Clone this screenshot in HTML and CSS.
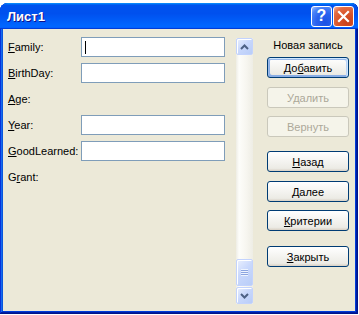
FILE: index.html
```html
<!DOCTYPE html>
<html lang="ru">
<head>
  <meta charset="UTF-8">
  <title>Лист1</title>
  <link rel="stylesheet" href="styles.css">
</head>
<body>
<div class="window">
  <div class="title-bar">
    <span class="title">Лист1</span>
    <div class="title-buttons">
      <span class="tb-btn help">?</span>
      <span class="tb-btn close">
        <svg width="19" height="19" viewBox="0 0 19 19">
          <path d="M5 5 L14 14 M14 5 L5 14" stroke="#fff" stroke-width="2.2" stroke-linecap="square"/>
        </svg>
      </span>
    </div>
  </div>

  <div class="window-body">
    <div class="fields">
      <div class="row">
        <span class="label"><u>F</u>amily:</span>
        <div class="box"><span class="caret"></span></div>
      </div>
      <div class="row">
        <span class="label"><u>B</u>irthDay:</span>
        <div class="box"></div>
      </div>
      <div class="row">
        <span class="label"><u>A</u>ge:</span>
      </div>
      <div class="row">
        <span class="label"><u>Y</u>ear:</span>
        <div class="box"></div>
      </div>
      <div class="row">
        <span class="label"><u>G</u>oodLearned:</span>
        <div class="box"></div>
      </div>
      <div class="row">
        <span class="label">G<u>r</u>ant:</span>
      </div>
    </div>

    <div class="scrollbar">
      <div class="sb-btn">
        <svg width="9" height="6" viewBox="0 0 9 6"><path d="M1 5 L4.5 1.5 L8 5" stroke="#4d6185" stroke-width="2" fill="none"/></svg>
      </div>
      <div class="track">
        <div class="thumb"><span class="grip"></span></div>
      </div>
      <div class="sb-btn">
        <svg width="9" height="6" viewBox="0 0 9 6"><path d="M1 1 L4.5 4.5 L8 1" stroke="#4d6185" stroke-width="2" fill="none"/></svg>
      </div>
    </div>

    <div class="actions">
      <div class="state">Новая запись</div>
      <button class="btn default first">До<u>б</u>авить</button>
      <button class="btn gap-m" disabled>Удалить</button>
      <button class="btn gap-s" disabled>Вернуть</button>
      <button class="btn gap-l"><u>Н</u>азад</button>
      <button class="btn gap-m"><u>Д</u>алее</button>
      <button class="btn gap-s"><u>К</u>ритерии</button>
      <button class="btn gap-xl"><u>З</u>акрыть</button>
    </div>
  </div>
</div>
</body>
</html>
```

FILE: styles.css
```css
body {
  margin: 0;
  background: #fff;
  font-family: "Liberation Sans", Arial, sans-serif;
  font-size: 11px;
  color: #000;
}

.window {
  margin-top: 3px;
  width: 358px;
  height: 311px;
  box-sizing: border-box;
  padding-bottom: 3px;
  display: flex;
  flex-direction: column;
  background: #0831d9;
  border-radius: 8px 7px 0 0;
  box-shadow: inset -1px -1px #00138c, inset 1px 1px #0831d9,
              inset -2px -2px #001ea0, inset 2px 2px #166aee,
              inset -3px -3px #003bda, inset 3px 3px #0855dd;
}

/* title bar */
.title-bar {
  height: 26px;
  display: flex;
  align-items: center;
  justify-content: space-between;
  padding: 0 4px 0 7px;
  border-radius: 8px 7px 0 0;
  background: linear-gradient(180deg, #0997ff, #0053ee 8%, #0050ee 40%, #06f 88%, #06f 93%, #005bff 95%, #003dd7 96%, #003dd7);
}

.title {
  color: #fff;
  font-weight: bold;
  font-size: 13px;
  text-shadow: 1px 1px #0f1089;
}

.title-buttons {
  display: flex;
  gap: 1px;
}

.tb-btn {
  width: 21px;
  height: 21px;
  box-sizing: border-box;
  border: 1px solid #fff;
  border-radius: 3px;
  display: flex;
  align-items: center;
  justify-content: center;
  color: #fff;
  font-weight: bold;
  font-size: 16px;
}

.help {
  background: radial-gradient(circle at 70% 80%, #1d52e4 0, #2a62ef 45%, #4a83f7 75%, #a7c4ff 100%);
}

.close {
  background: radial-gradient(circle at 70% 80%, #c8401a 0, #d9542a 45%, #e36d45 75%, #f7b8a0 100%);
}

/* body */
.window-body {
  flex: 1;
  margin: 0 3px;
  background: #ece9d8;
  display: flex;
}

.fields {
  width: 233px;
  box-sizing: border-box;
  padding: 5px 0 0 5px;
}

.row {
  height: 26px;
  display: flex;
  align-items: center;
}

.label {
  width: 73px;
}

.box {
  width: 144px;
  height: 20px;
  box-sizing: border-box;
  border: 1px solid #7f9db9;
  background: #fff;
  display: flex;
  align-items: center;
  padding-left: 3px;
}

.caret {
  width: 1px;
  height: 13px;
  background: #000;
}

/* scrollbar */
.scrollbar {
  width: 17px;
  height: 266px;
  margin-top: 9px;
  display: flex;
  flex-direction: column;
  background: linear-gradient(90deg, #eeede5 0, #fdfdfa 18%, #f7f6f0 60%, #eeede5 100%);
}

.sb-btn, .thumb {
  box-sizing: border-box;
  border: 1px solid #c3d3fd;
  border-radius: 2px;
  background: linear-gradient(135deg, #eaf0fe 0, #c9d8fc 45%, #b9cdf8 100%);
  box-shadow: inset 1px 1px #fff;
}

.sb-btn {
  height: 17px;
  display: flex;
  align-items: center;
  justify-content: center;
}

.track {
  flex: 1;
  display: flex;
  flex-direction: column;
  justify-content: flex-end;
  padding-bottom: 1px;
}

.thumb {
  height: 27px;
  display: flex;
  align-items: center;
  justify-content: center;
}

.grip {
  width: 7px;
  height: 7px;
  background: repeating-linear-gradient(180deg, #eef4fe 0, #eef4fe 1px, #8ca5e0 1px, #8ca5e0 2px);
}

/* buttons */
.actions {
  flex: 1;
  padding: 9px 6px 0 14px;
  display: flex;
  flex-direction: column;
}

.state {
  height: 14px;
  line-height: 14px;
  text-align: center;
}

.btn {
  height: 21px;
  padding: 0;
  font-family: "Liberation Sans", Arial, sans-serif;
  font-size: 11px;
  color: #000;
  border: 1px solid #003c74;
  border-radius: 3px;
  background: linear-gradient(180deg, #fff, #ecebe5 86%, #d8d0c4);
}

.btn:disabled {
  color: #aca899;
  border-color: #cac8bb;
  background: #f5f4ea;
}

.default {
  box-shadow: inset -1px 1px #cee7ff, inset 1px 2px #98b8ea, inset -2px 2px #bcd4f6, inset 1px -1px #89ade4, inset 2px -2px #89ade4;
}

.first { margin-top: 5px; }
.gap-s { margin-top: 8px; }
.gap-m { margin-top: 9px; }
.gap-l { margin-top: 14px; }
.gap-xl { margin-top: 15px; }
```
